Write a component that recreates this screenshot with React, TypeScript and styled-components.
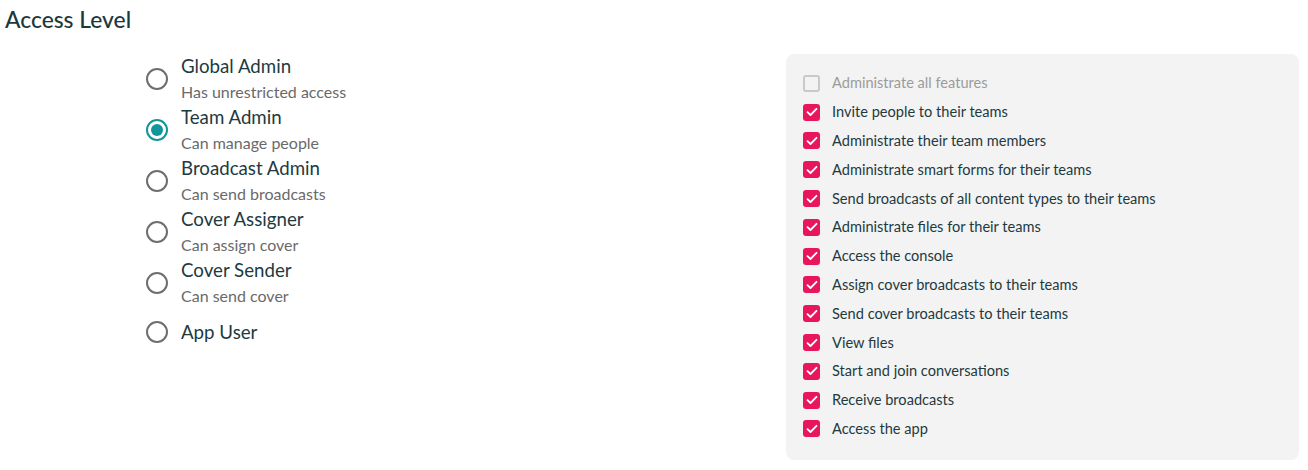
import React from "react";
import styled, { createGlobalStyle } from "styled-components";

const GlobalStyle = createGlobalStyle`
  html, body { margin: 0; padding: 0; background: #ffffff; }
  body { font-family: Lato, "Open Sans", "Liberation Sans", sans-serif; color: #1e3a3f; }
`;

const Page = styled.div`
  width: 1308px;
  padding-top: 6px;
  box-sizing: border-box;
`;

const Heading = styled.h2`
  margin: 0 0 0 5px;
  font-size: 22.8px;
  line-height: 26px;
  font-weight: 500;
  color: #1b383d;
`;

const Content = styled.div`
  display: flex;
  margin-top: 21px;
`;

const RoleColumn = styled.div`
  width: 786px;
  padding-left: 146px;
  box-sizing: border-box;
  display: flex;
  flex-direction: column;
`;

const RoleItem = styled.label<{ $offset?: number }>`
  display: flex;
  align-items: center;
  gap: 13px;
  padding-top: ${(p) => p.$offset ?? 0}px;
  cursor: pointer;
`;

const Radio = styled.span<{ $checked?: boolean }>`
  width: 22px;
  height: 22px;
  box-sizing: border-box;
  border-radius: 50%;
  border: 2px solid ${(p) => (p.$checked ? "#12959c" : "#6e6e6e")};
  display: flex;
  align-items: center;
  justify-content: center;
  flex-shrink: 0;
  &::after {
    content: "";
    width: 12px;
    height: 12px;
    border-radius: 50%;
    background: #12959c;
    display: ${(p) => (p.$checked ? "block" : "none")};
  }
`;

const RoleText = styled.div`
  display: flex;
  flex-direction: column;
`;

const RoleTitle = styled.span`
  font-size: 18.7px;
  line-height: 26px;
  color: #1d3a3f;
`;

const RoleSub = styled.span`
  font-size: 16px;
  line-height: 25px;
  color: #6a6a6a;
`;

const Panel = styled.div`
  width: 513px;
  margin-top: 1px;
  background: #f3f3f3;
  border-radius: 8px;
  padding: 15px 17px 17px;
  box-sizing: border-box;
  display: flex;
  flex-direction: column;
`;

const PermRow = styled.div`
  height: 28.8px;
  display: flex;
  align-items: center;
  gap: 12px;
`;

const Box = styled.span<{ $checked?: boolean }>`
  width: 17px;
  height: 17px;
  box-sizing: border-box;
  border-radius: 3px;
  flex-shrink: 0;
  display: flex;
  align-items: center;
  justify-content: center;
  background: ${(p) => (p.$checked ? "#e8175d" : "#f3f3f3")};
  border: ${(p) => (p.$checked ? "none" : "2px solid #c9c9c9")};
`;

const PermLabel = styled.span<{ $disabled?: boolean }>`
  font-size: 14.6px;
  line-height: 18px;
  color: ${(p) => (p.$disabled ? "#9b9b9b" : "#1e3a3f")};
`;

const roles = [
  { title: "Global Admin", sub: "Has unrestricted access" },
  { title: "Team Admin", sub: "Can manage people", checked: true },
  { title: "Broadcast Admin", sub: "Can send broadcasts" },
  { title: "Cover Assigner", sub: "Can assign cover" },
  { title: "Cover Sender", sub: "Can send cover" },
  { title: "App User", offset: 11 },
];

const perms = [
  { label: "Administrate all features", disabled: true },
  { label: "Invite people to their teams" },
  { label: "Administrate their team members" },
  { label: "Administrate smart forms for their teams" },
  { label: "Send broadcasts of all content types to their teams" },
  { label: "Administrate files for their teams" },
  { label: "Access the console" },
  { label: "Assign cover broadcasts to their teams" },
  { label: "Send cover broadcasts to their teams" },
  { label: "View files" },
  { label: "Start and join conversations" },
  { label: "Receive broadcasts" },
  { label: "Access the app" },
];

const Check = () => (
  <svg width="12" height="10" viewBox="0 0 12 10" fill="none">
    <path d="M1.5 5.2 L4.5 8 L10.5 1.8" stroke="#ffffff" strokeWidth="1.8" strokeLinecap="round" strokeLinejoin="round" />
  </svg>
);

export default function App() {
  return (
    <Page>
      <GlobalStyle />
      <Heading>Access Level</Heading>
      <Content>
        <RoleColumn>
          {roles.map((r) => (
            <RoleItem key={r.title} $offset={r.offset}>
              <Radio $checked={r.checked} />
              <RoleText>
                <RoleTitle>{r.title}</RoleTitle>
                {r.sub && <RoleSub>{r.sub}</RoleSub>}
              </RoleText>
            </RoleItem>
          ))}
        </RoleColumn>
        <Panel>
          {perms.map((p) => (
            <PermRow key={p.label}>
              <Box $checked={!p.disabled}>{!p.disabled && <Check />}</Box>
              <PermLabel $disabled={p.disabled}>{p.label}</PermLabel>
            </PermRow>
          ))}
        </Panel>
      </Content>
    </Page>
  );
}
